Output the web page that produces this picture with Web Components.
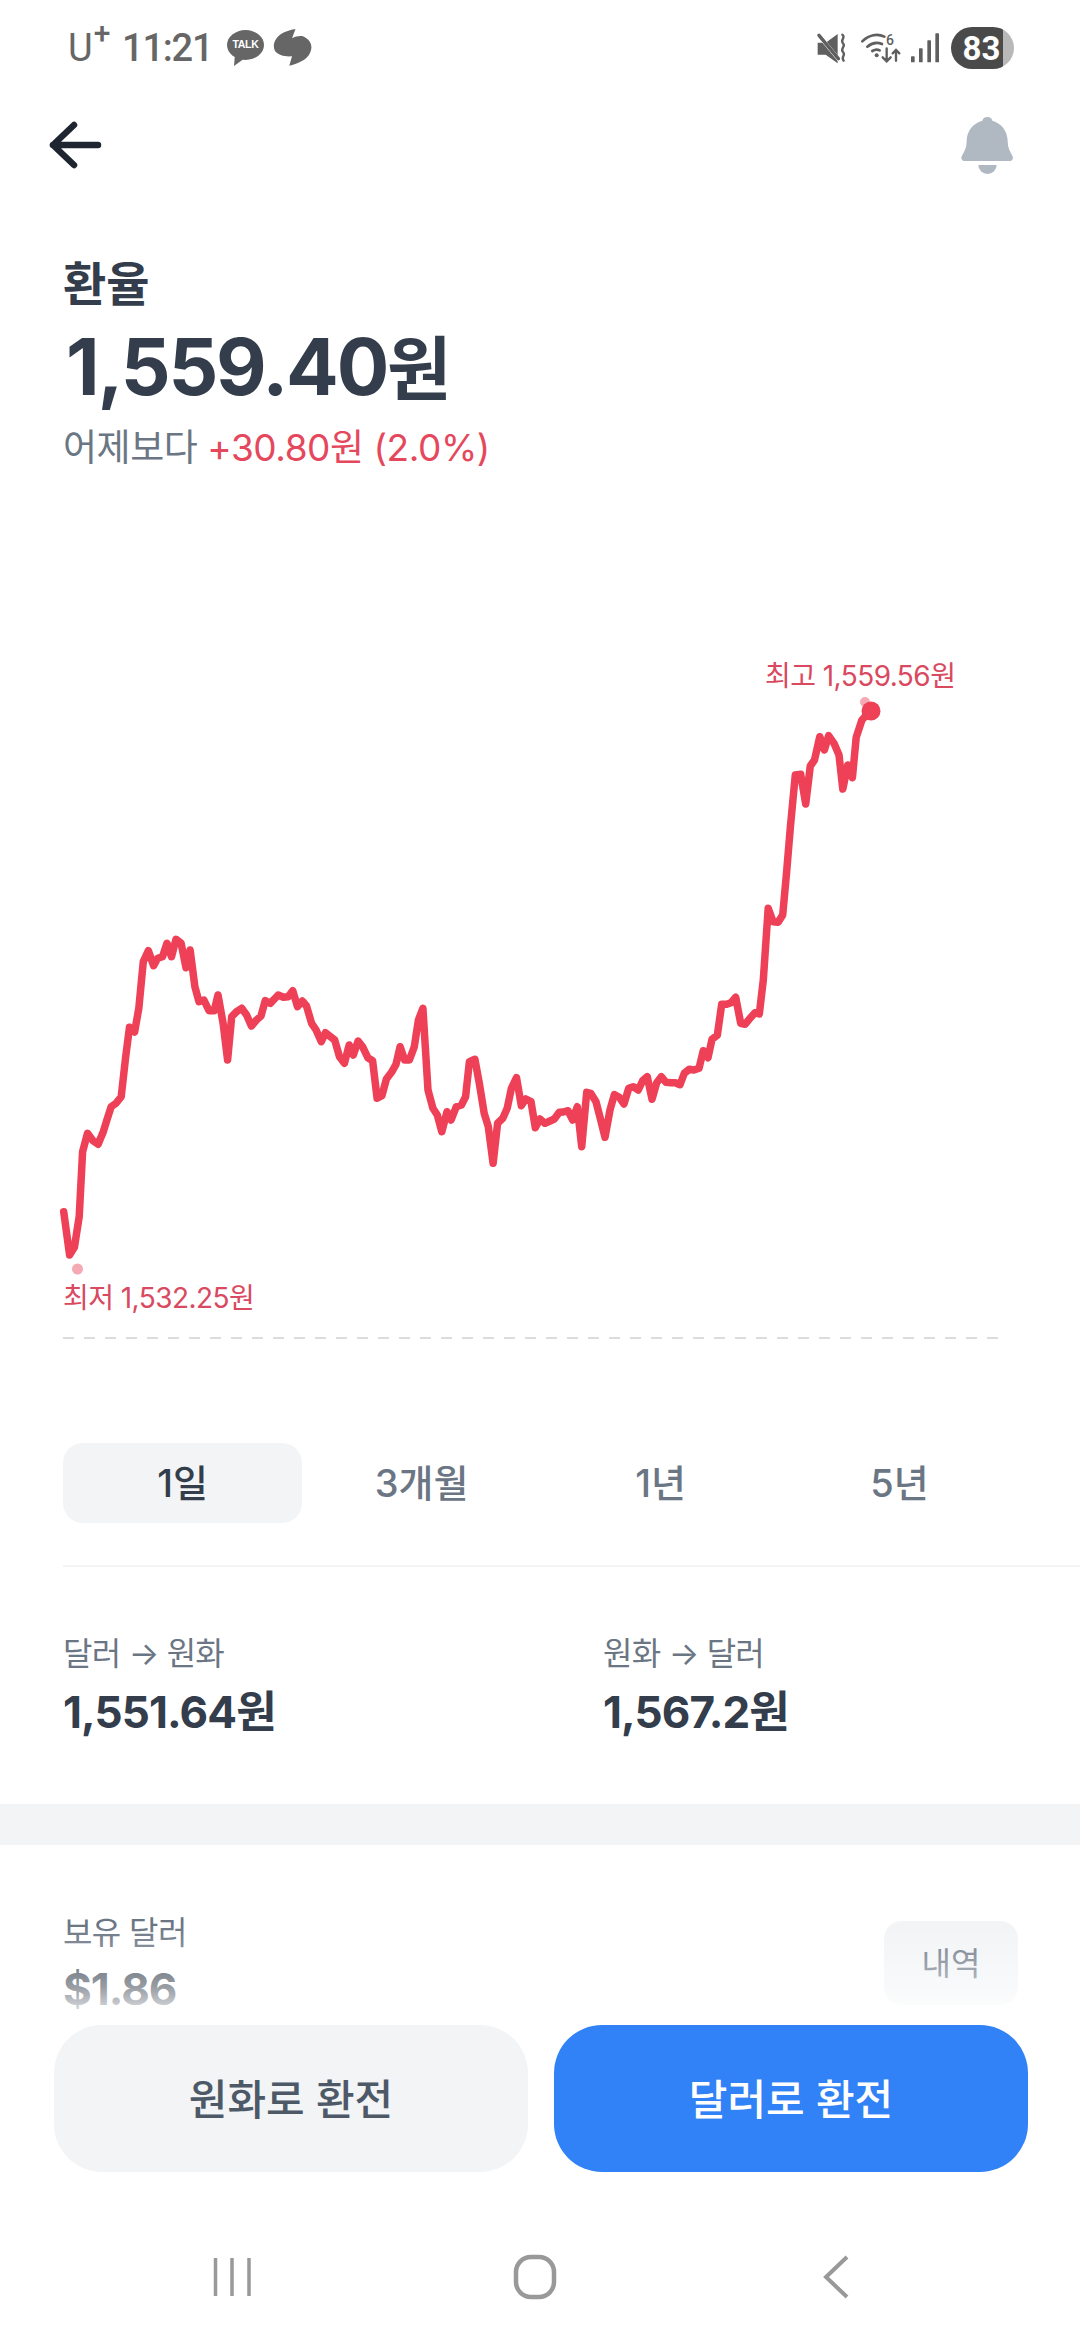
<!DOCTYPE html>
<html lang="ko">
<head>
<meta charset="utf-8">
<title>환율</title>
<style>
html,body{margin:0;padding:0;background:#fff}
body{font-family:Inter,"Noto Sans CJK KR",sans-serif}
</style>
</head>
<body>
<fx-app>
  <fx-status></fx-status>
  <fx-topnav></fx-topnav>
  <fx-rate-head title-text="환율" value="1,559.40" delta="+30.80원 (2.0%)"></fx-rate-head>
  <fx-chart></fx-chart>
  <fx-tabs></fx-tabs>
  <fx-rates></fx-rates>
  <fx-band></fx-band>
  <fx-holding></fx-holding>
  <fx-dock></fx-dock>
</fx-app>
<script>
function def(name, html, init){
  customElements.define(name, class extends HTMLElement{
    connectedCallback(){
      if(this.shadowRoot) return;
      const r=this.attachShadow({mode:"open"});
      r.innerHTML = typeof html==="function" ? html(this) : html;
      if(init) init(r,this);
    }
  });
}
const FONT='Inter,"Noto Sans CJK KR",sans-serif';

def("fx-app",`<style>
:host{display:flex;flex-direction:column;position:relative;width:1080px;height:2340px;overflow:hidden;background:#fff;font-family:${FONT}}
</style><slot></slot>`);

def("fx-status",`<style>
:host{display:flex;align-items:center;height:96px;box-sizing:border-box;padding:0 66px 0 68px;color:#666}
.carrier{font:400 38px Roboto,${FONT};display:flex;align-items:flex-start;width:54px;line-height:38px}
.carrier sup{font-size:30px;line-height:24px;margin:-8px 0 0 1px;font-weight:500}
.time{font:500 38px Roboto,${FONT};letter-spacing:-1.2px;width:105px}
.talk{position:relative;width:37px;height:36px;margin-right:9px;display:flex;justify-content:center}
.talk svg{position:absolute;left:0;top:0}
.talk span{position:relative;font:700 10.5px "Liberation Sans",sans-serif;color:#fff;line-height:28px;letter-spacing:-.3px}
.spacer{flex:1}
.right{display:flex;align-items:center}
.batt{width:63px;height:42px;border-radius:21px;background:linear-gradient(90deg,#4a4a4a 52px,#b8b8b8 52px);color:#fff;font:700 33px Roboto,${FONT};display:flex;align-items:center;justify-content:center;box-sizing:border-box;padding-right:2px;margin-left:11px}
</style>
<span class="carrier">U<sup>+</sup></span><span class="time">11:21</span>
<span class="talk"><svg width="37" height="36" viewBox="0 0 37 36"><ellipse cx="18.5" cy="15" rx="18.5" ry="15" fill="#666"/><path d="M8 24 L7 36 L18 28z" fill="#666"/></svg><span>TALK</span></span>
<svg width="40" height="38" viewBox="0 0 40 38"><path fill="#666" d="M22.5 0 L19 9.3 C24 6.5 30 6 33 9 C38 12 40 18 37 24 C34 31 24 35 16.3 36.7 L19 27.3 C12 28 5 26 2 22 C-1 16 2 9 8 5 C12 2.5 17 1 22.5 0Z"/></svg>
<span class="spacer"></span>
<span class="right">
<svg width="31" height="31" viewBox="105 97 93 93"><path fill="#5f5f5f" d="M110 126h24l36-26v88l-36-26h-24z"/><path d="M110 100l68 82" stroke="#fff" stroke-width="12"/><path d="M114 104l58 70" stroke="#5f5f5f" stroke-width="10" stroke-linecap="round"/><path d="M184 102c12 10-8 14 2 26c10 10-10 14 0 26c10 10-8 14 2 26" stroke="#5f5f5f" stroke-width="7" fill="none" stroke-linecap="round"/></svg>
<svg width="42" height="32" viewBox="243 96 126 96" style="margin-left:14px"><g fill="none" stroke="#5f5f5f" stroke-linecap="round"><path stroke-width="8" d="M247 124c20-20 46-24 66-14"/><path stroke-width="8" d="M262 140c14-12 30-14 44-8"/><path stroke-width="8" d="M277 153c8-5 16-5 22-2"/><path stroke-width="7" d="M320 145v38M308 172l12 12 12-12M348 182v-30M338 160l10-10 10 10"/></g><circle cx="290" cy="166" r="6" fill="#5f5f5f"/><text x="318" y="134" font-family="Roboto,sans-serif" font-size="42" font-weight="500" fill="#5f5f5f">6</text></svg>
<svg width="29" height="30" viewBox="392 98 87 90" style="margin-left:8px"><g fill="#5f5f5f"><rect x="392" y="168" width="11" height="18" rx="2"/><rect x="416" y="144" width="11" height="42" rx="2"/><rect x="441" y="120" width="11" height="66" rx="2"/><rect x="465" y="99" width="11" height="87" rx="2"/></g></svg>
<span class="batt">83</span>
</span>`);

def("fx-topnav",`<style>
:host{display:flex;align-items:center;justify-content:space-between;height:98px;padding:0 66px 0 48px}
svg{display:block}
</style>
<svg width="54" height="48" viewBox="0 0 54 48"><path d="M5 24H50M26 4L5 24L26 44" fill="none" stroke="#1f2530" stroke-width="6.5" stroke-linecap="round" stroke-linejoin="round"/></svg>
<svg width="54" height="59" viewBox="535 345 162 177"><path fill="#b0b8c1" d="M617 348c8 0 14 5 15 11c28 8 46 32 46 62c0 18 6 30 14 43c4 7 1 16-8 16L549 480c-9 0-12-9-8-16c8-13 14-25 14-43c0-30 18-54 47-62c1-6 7-11 15-11z"/><path fill="#b0b8c1" d="M590 492h55a27.500 27 0 0 1-55 0z"/></svg>`);

def("fx-rate-head",(el)=>`<style>
:host{display:block;padding:60px 0 0 63px;height:286px;box-sizing:border-box;color:#333d4b}
.t{font-size:47px;font-weight:700;line-height:60px}
.v{font-size:78px;font-weight:700;line-height:98px;margin-top:4px;letter-spacing:-2.2px;padding-left:3px}
.v span{font-size:70px;letter-spacing:0}
.d{font-size:37px;line-height:50px;color:#6b7684;margin-top:4px;white-space:pre;letter-spacing:-.45px}
.d b{font-weight:400;color:#e5485d}
</style>
<div class="t">${el.getAttribute("title-text")}</div>
<div class="v">${el.getAttribute("value")}<span>원</span></div>
<div class="d">어제보다 <b>${el.getAttribute("delta")}</b></div>`);

/* traced polyline */
const A=[[185,935],[202,1065],[216,1042],[230,950],[240,755],[254,700],[270,722],[285,733],[300,695],[312,655],[323,620],[337,610],[352,590],[365,470],[376,382],[391,396],[403,325],[416,185],[431,152],[446,197],[458,175],[472,170],[485,130],[498,170],[511,118],[526,130],[540,203],[552,150],[566,260],[578,305],[592,300],[607,332],[622,332],[633,285],[648,370],[661,480],[673,350],[687,335],[702,325],[716,345],[730,378],[745,360],[758,348],[770,302],[785,310],[808,285],[823,292],[837,290],[850,272],[864,320],[878,303],[890,318],[905,370],[918,390],[933,425],[945,398],[972,420],[986,470],[1000,490],[1014,435],[1026,465],[1040,423],[1054,442],[1068,473],[1082,482],[1095,595],[1109,587],[1122,537],[1137,517],[1150,493],[1162,440],[1175,480],[1189,480],[1203,440],[1215,360],[1228,325],[1243,570],[1257,625],[1270,645],[1283,695],[1298,635],[1310,660],[1325,620],[1340,615],[1352,590],[1363,485],[1379,478],[1392,550],[1406,640],[1418,680],[1432,790],[1445,670],[1460,655],[1473,625],[1485,565],[1500,533],[1514,617],[1527,597],[1542,605]];
const B=[[106,503],[120,477],[135,490],[150,483],[163,477],[178,457],[190,456],[204,452],[218,480],[232,440],[245,560],[260,397],[272,400],[288,425],[302,480],[315,532],[330,450],[343,404],[358,412],[372,432],[386,385],[400,380],[415,390],[428,362],[442,350],[456,418],[470,368],[484,350],[498,367],[512,368],[526,368],[540,374],[553,340],[568,328],[582,330],[597,325],[610,272],[624,293],[636,238],[652,226],[665,133],[680,133],[693,128],[707,112],[722,190],[735,193],[750,175],[765,158],[778,162],[790,60]];
const C=[[962,805],[975,845],[988,847],[1000,825],[1010,700],[1020,560],[1033,405],[1047,403],[1060,492],[1072,378],[1083,360],[1097,290],[1109,330],[1120,287],[1134,310],[1147,345],[1157,447],[1170,375],[1182,413],[1192,292],[1207,240],[1230,212]];
const pts=[...A.map(p=>[p[0]/2.904,p[1]/3+900]),...B.map(p=>[p[0]/3+500,p[1]/3+960]),...C.map(p=>[p[0]/2.613+400,p[1]/3+640])].map(p=>p[0].toFixed(1)+","+p[1].toFixed(1)).join(" ");

def("fx-chart",`<style>
:host{display:block;position:relative;height:862px;width:1080px}
svg{display:block}
.l{position:absolute;font-size:28px;line-height:36px;color:#d9495f;white-space:nowrap;letter-spacing:-.55px}
.hi{left:765px;top:178px}
.lo{left:63px;top:800px}
</style>
<svg width="1080" height="862" viewBox="0 480 1080 862">
<polyline points="${pts}" fill="none" stroke="#ee4056" stroke-width="7.5" stroke-linejoin="round" stroke-linecap="round"/>
<circle cx="77.500" cy="1269" r="5.500" fill="#f5a9b3"/>
<circle cx="865" cy="702" r="5" fill="#f5a9b3"/>
<circle cx="871" cy="711" r="9.500" fill="#ee4056"/>
<line x1="63" y1="1338" x2="1000" y2="1338" stroke="#dcdcdc" stroke-width="2" stroke-dasharray="11 10"/>
</svg>
<span class="l hi">최고 1,559.56원</span>
<span class="l lo">최저 1,532.25원</span>`);

def("fx-tab",`<style>
:host{display:flex;align-items:center;justify-content:center;width:239px;height:80px;box-sizing:border-box;padding-bottom:5px;font-size:38px;font-weight:500;color:#6b7684;border-radius:20px;flex:none}
:host([active]){background:#f2f4f6;color:#333d4b}
</style><slot></slot>`);

def("fx-tabs",`<style>
:host{display:flex;flex-direction:column;margin-top:101px;padding-left:63px}
.row{display:flex}
.div{height:2px;background:#f2f4f6;margin-top:42px}
</style>
<div class="row"><slot></slot></div><div class="div"></div>`,(r,el)=>{
  el.innerHTML='<fx-tab active>1일</fx-tab><fx-tab>3개월</fx-tab><fx-tab>1년</fx-tab><fx-tab>5년</fx-tab>';
});

def("fx-rates",`<style>
:host{display:flex;padding:62px 0 0 63px;height:237px;box-sizing:border-box}
.c{width:540px;flex:none}
.k{font-size:32px;line-height:50px;color:#6b7684;letter-spacing:-.75px}
.v{font-size:44px;font-weight:700;line-height:60px;color:#333d4b;margin-top:3px;letter-spacing:-.9px}
</style>
<div class="c"><div class="k">달러 → 원화</div><div class="v">1,551.64원</div></div>
<div class="c"><div class="k">원화 → 달러</div><div class="v">1,567.2원</div></div>`);

def("fx-band",`<style>:host{display:block;height:41px;background:#f2f4f6}</style>`);

def("fx-holding",`<style>
:host{display:flex;justify-content:space-between;padding:65px 62px 0 63px}
.k{font-size:32px;line-height:46px;color:#6b7684;letter-spacing:-.6px}
.v{font-size:44px;font-weight:700;line-height:56px;color:#333d4b;margin-top:5px;letter-spacing:-1px}
.b{width:134px;height:84px;margin-top:11px;border-radius:18px;background:#f2f4f6;display:flex;align-items:center;justify-content:center;box-sizing:border-box;padding-bottom:4px;font-size:32px;color:#6b7684}
</style>
<div><div class="k">보유 달러</div><div class="v">$1.86</div></div>
<div class="b">내역</div>`);

def("fx-dock",`<style>
:host{position:absolute;left:0;right:0;bottom:0;display:flex;flex-direction:column;height:440px}
.fade{height:125px;background:linear-gradient(180deg,rgba(255,255,255,0) 20%,rgba(255,255,255,.5) 70%,#fff 100%)}
.panel{flex:1;background:#fff;display:flex;flex-direction:column}
.btns{display:flex;gap:26px;padding:0 52px 0 54px}
.btn{flex:1;height:147px;box-sizing:border-box;padding-bottom:5px;border-radius:48px;display:flex;align-items:center;justify-content:center;font-size:42px;font-weight:500}
.g{background:#f2f4f6;color:#4e5968}
.p{background:#3182f6;color:#fff}
.nav{flex:1;display:flex;align-items:center;padding:42px 0 0 212px}
.nav .h{margin-left:259.5px}
.nav .k{margin-left:264.5px}
svg{display:block;flex:none}
</style>
<div class="fade"></div>
<div class="panel">
<div class="btns"><div class="btn g">원화로 환전</div><div class="btn p">달러로 환전</div></div>
<div class="nav">
<svg width="40" height="40" viewBox="0 0 40 40"><path d="M3.500 1V39M20 1V39M37 1V39" stroke="#999" stroke-width="3.500"/></svg>
<svg class="h" width="46" height="46" viewBox="0 0 46 46"><rect x="4" y="3" width="38" height="40" rx="15" fill="none" stroke="#999" stroke-width="4.500"/></svg>
<svg class="k" width="28" height="44" viewBox="0 0 28 44"><path d="M25 2L4 22L25 42" fill="none" stroke="#999" stroke-width="4"/></svg>
</div>
</div>`);
</script>
</body>
</html>
